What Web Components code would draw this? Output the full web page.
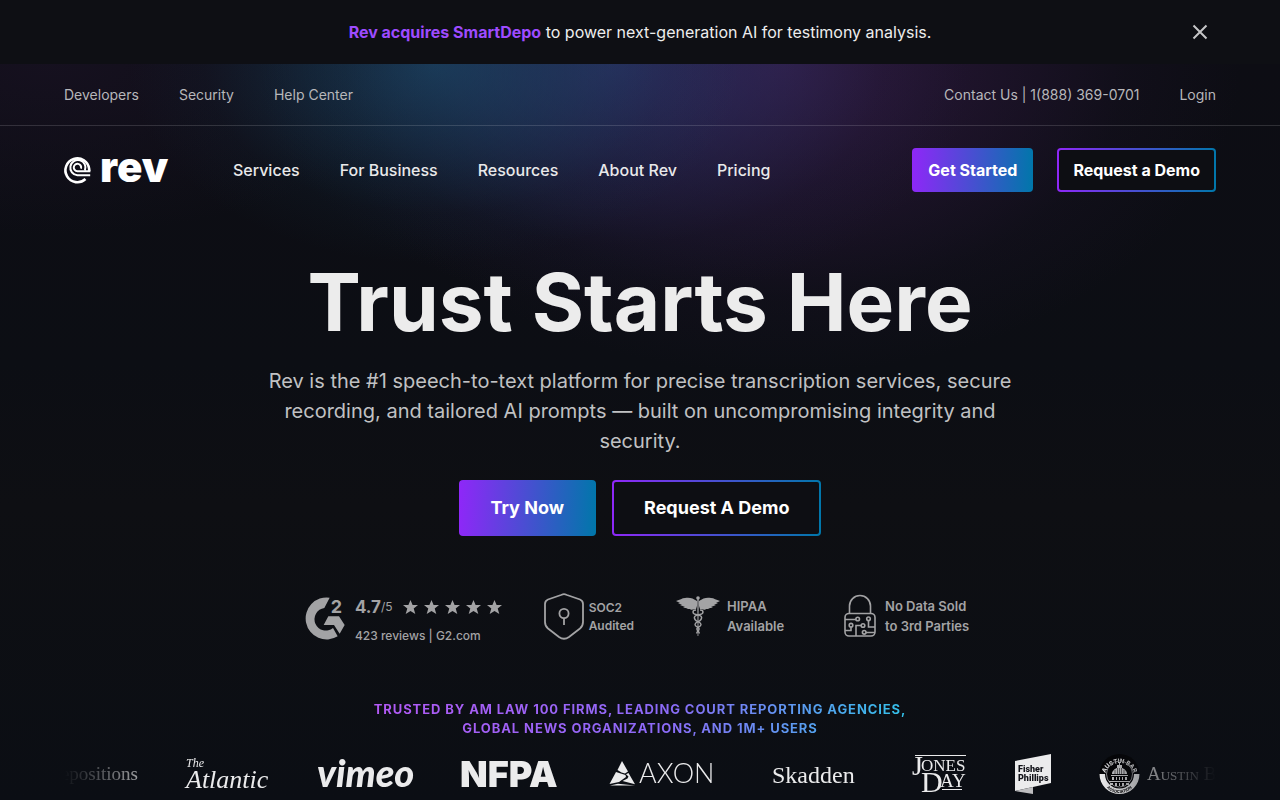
<!DOCTYPE html>
<html lang="en">
<head>
<meta charset="utf-8">
<meta name="viewport" content="width=device-width, initial-scale=1">
<title>Rev | Trust Starts Here</title>
<style>
    body {
        margin: 0;
        background: #0d0e13;
        color: #ededed;
        font-family: Inter, "Liberation Sans", sans-serif;
    }
</style>
</head>
<body>
<rev-page>
    <rev-banner slot="banner"><a href="#smartdepo">Rev acquires SmartDepo</a> to power next-generation AI for testimony analysis.</rev-banner>
    <rev-topbar>
        <a href="#developers">Developers</a>
        <a href="#security">Security</a>
        <a href="#help">Help Center</a>
        <a slot="end" href="#contact">Contact Us | 1(888) 369-0701</a>
        <a slot="end" href="#login">Login</a>
    </rev-topbar>
    <rev-navbar>
        <a href="#services">Services</a>
        <a href="#business">For Business</a>
        <a href="#resources">Resources</a>
        <a href="#about">About Rev</a>
        <a href="#pricing">Pricing</a>
        <rev-button slot="actions" href="#start">Get Started</rev-button>
        <rev-button slot="actions" href="#demo" outline>Request a Demo</rev-button>
    </rev-navbar>
    <rev-hero>
        <span slot="title">Trust Starts Here</span>
        <span slot="text">Rev is the #1 speech-to-text platform for precise transcription services, secure recording, and tailored AI prompts — built on uncompromising integrity and security.</span>
        <rev-button slot="actions" href="#try" large>Try Now</rev-button>
        <rev-button slot="actions" href="#demo" large outline>Request A Demo</rev-button>
    </rev-hero>
    <rev-badges></rev-badges>
    <rev-customers>Trusted by Am Law 100 firms, leading court reporting agencies,<br>global news organizations, and 1M+ users</rev-customers>
</rev-page>

<script>
class RevPage extends HTMLElement {
    connectedCallback() {
        this.attachShadow({ mode: 'open' });
        this.shadowRoot.innerHTML = `
            <style>
                :host {
                    display: flex;
                    flex-direction: column;
                    min-height: 100vh;
                }

                main {
                    flex: 1;
                    background:
                        radial-gradient(ellipse 24% 200px at 34% 0, rgba(28, 84, 118, 0.56), rgba(26, 74, 106, 0.36) 40%, rgba(22, 60, 88, 0.1) 75%, transparent),
                        radial-gradient(ellipse 28% 240px at 48% 0, rgba(46, 62, 126, 0.54), rgba(40, 52, 108, 0.36) 40%, rgba(34, 38, 84, 0.1) 75%, transparent),
                        radial-gradient(ellipse 36% 310px at 61% 0, rgba(84, 38, 108, 0.5), rgba(66, 32, 90, 0.32) 40%, rgba(46, 26, 66, 0.12) 75%, transparent),
                        radial-gradient(ellipse 30% 170px at 4% 0, rgba(30, 20, 42, 0.5), transparent),
                        linear-gradient(#0d0d14, #0c0e14 300px, #0e0f13 60%, #0b0e14);
                }
            </style>
            <slot name="banner"></slot>
            <main><slot></slot></main>
        `;
    }
}

class RevBanner extends HTMLElement {
    connectedCallback() {
        this.attachShadow({ mode: 'open' });
        this.shadowRoot.innerHTML = `
            <style>
                :host {
                    display: grid;
                    grid-template-columns: 1fr auto 1fr;
                    align-items: center;
                    min-height: 64px;
                    padding: 0 64px;
                    background: #0e0f14;
                    font-size: 16px;
                    line-height: 24px;
                }

                p {
                    grid-column: 2;
                    margin: 0;
                }

                ::slotted(a) {
                    color: #9e4bff;
                    font-weight: 700;
                    text-decoration: none;
                }

                button {
                    display: flex;
                    justify-self: end;
                    padding: 8px;
                    border: 0;
                    background: none;
                    color: #c6c6c8;
                    cursor: pointer;
                }
            </style>
            <p><slot></slot></p>
            <button type="button" aria-label="Close">
                <svg width="16" height="16" viewBox="0 0 16 16" fill="none" stroke="currentColor" stroke-width="2"><path d="M1.5 1.5l13 13M14.5 1.5l-13 13"/></svg>
            </button>
        `;

        this.shadowRoot.querySelector('button').addEventListener('click', () => this.remove());
    }
}

class RevTopbar extends HTMLElement {
    connectedCallback() {
        this.attachShadow({ mode: 'open' });
        this.shadowRoot.innerHTML = `
            <style>
                :host {
                    display: flex;
                    justify-content: space-between;
                    padding: 20px 64px;
                    border-bottom: 1px solid rgba(255, 255, 255, 0.14);
                    color: #b7b7ba;
                    font-size: 14px;
                    line-height: 21px;
                }

                div {
                    display: flex;
                    gap: 40px;
                }

                ::slotted(a) {
                    color: inherit;
                    text-decoration: none;
                }
            </style>
            <div><slot></slot></div>
            <div><slot name="end"></slot></div>
        `;
    }
}

class RevLogo extends HTMLElement {
    connectedCallback() {
        this.attachShadow({ mode: 'open' });
        this.shadowRoot.innerHTML = `
            <style>
                :host {
                    display: block;
                }

                a {
                    display: flex;
                    align-items: center;
                    color: #fff;
                }

                svg {
                    display: block;
                    overflow: visible;
                }
            </style>
            <a href="#home" aria-label="rev">
                <svg width="105" height="28" viewBox="0 0 105 28">
                    <g fill="none" stroke="#fff" stroke-width="2.6">
                        <path d="M25.2 15V13.2A11.9 11.9 0 1 0 21.5 23"/>
                        <path d="M20.9 14.6A7.6 7.6 0 1 0 13.4 19.2H26.2" stroke-width="2"/>
                        <path d="M17 12.6A3.7 3.7 0 1 0 13.4 15.2H26.4" stroke-width="2"/>
                    </g>
                    <text x="36" y="26" fill="#fff" font-size="42" font-weight="900">rev</text>
                </svg>
            </a>
        `;
    }
}

class RevNavbar extends HTMLElement {
    connectedCallback() {
        this.attachShadow({ mode: 'open' });
        this.shadowRoot.innerHTML = `
            <style>
                :host {
                    display: flex;
                    align-items: center;
                    gap: 64px;
                    padding: 22px 64px;
                    font-size: 16px;
                    font-weight: 500;
                    line-height: 24px;
                }

                nav {
                    display: flex;
                    flex: 1;
                    gap: 40px;
                }

                .actions {
                    display: flex;
                    gap: 24px;
                }

                ::slotted(a) {
                    color: #e9e9ea;
                    text-decoration: none;
                }
            </style>
            <rev-logo></rev-logo>
            <nav><slot></slot></nav>
            <div class="actions"><slot name="actions"></slot></div>
        `;
    }
}

class RevButton extends HTMLElement {
    connectedCallback() {
        this.attachShadow({ mode: 'open' });
        this.shadowRoot.innerHTML = `
            <style>
                :host {
                    display: block;
                    --brand: linear-gradient(92deg, #8f27f8, #0077aa);
                }

                a {
                    display: block;
                    padding: 10px 16px;
                    border-radius: 4px;
                    background: var(--brand);
                    color: #fff;
                    font-size: 16px;
                    font-weight: 700;
                    line-height: 24px;
                    text-decoration: none;
                    white-space: nowrap;
                }

                :host([large]) a {
                    padding: 15px 32px;
                    font-size: 18px;
                    line-height: 26px;
                }

                :host([outline]) a {
                    border: 2px solid transparent;
                    padding: 8px 14px;
                    background: linear-gradient(#0d0e13, #0d0e13) padding-box, var(--brand) border-box;
                }

                :host([outline][large]) a {
                    padding: 13px 30px;
                }
            </style>
            <a href="${this.getAttribute('href')}"><slot></slot></a>
        `;
    }
}

class RevHero extends HTMLElement {
    connectedCallback() {
        this.attachShadow({ mode: 'open' });
        this.shadowRoot.innerHTML = `
            <style>
                :host {
                    display: flex;
                    flex-direction: column;
                    align-items: center;
                    padding: 44px 64px 0;
                    text-align: center;
                }

                h1 {
                    margin: 0;
                    color: #ececec;
                    font-size: 80px;
                    font-weight: 700;
                    line-height: 88px;
                }

                p {
                    max-width: 768px;
                    margin: 20px 0 24px;
                    color: #c0c1c3;
                    font-size: 20px;
                    line-height: 30px;
                }

                .actions {
                    display: flex;
                    gap: 16px;
                }
            </style>
            <h1><slot name="title"></slot></h1>
            <p><slot name="text"></slot></p>
            <div class="actions"><slot name="actions"></slot></div>
        `;
    }
}

class RevBadges extends HTMLElement {
    connectedCallback() {
        const star = '<svg width="15" height="15" viewBox="0 0 15 15" fill="currentColor"><path d="M7.5 0l2.1 5h5.4l-4.3 3.5 1.6 5.6-4.8-3.2-4.8 3.2 1.6-5.6L0 5h5.4z"/></svg>';

        this.attachShadow({ mode: 'open' });
        this.shadowRoot.innerHTML = `
            <style>
                :host {
                    display: flex;
                    align-items: flex-start;
                    justify-content: center;
                    gap: 42px;
                    padding: 56px 64px 0;
                    color: #a3a3a5;
                    font-size: 13px;
                    font-weight: 600;
                    line-height: 20px;
                }

                .badge {
                    display: flex;
                    align-items: center;
                    min-height: 48px;
                    gap: 5px;
                }

                .rating {
                    align-items: flex-start;
                    gap: 10px;
                    padding-top: 5px;
                    font-size: 12px;
                    font-weight: 500;
                }

                .score {
                    display: flex;
                    align-items: center;
                    padding-bottom: 9px;
                }

                .score b {
                    font-size: 17px;
                }

                .score span {
                    font-weight: 400;
                }

                .stars {
                    display: flex;
                    gap: 6px;
                    margin-left: 10px;
                }

                .soc {
                    min-height: 50px;
                    font-size: 12px;
                    line-height: 18px;
                }

                .hipaa {
                    min-width: 126px;
                    gap: 7px;
                }

                .privacy {
                    min-width: 132px;
                    gap: 9px;
                }

                svg {
                    display: block;
                }
            </style>
            <div class="badge rating">
                <svg width="41" height="44" viewBox="0 0 123 132" fill="currentColor" aria-label="G2">
                    <path d="M77 2A63 63 0 1 0 101 118L87 93A34 34 0 1 1 61 33z"/>
                    <path d="M73 58h32l17 26-15 26-17-26H59z"/>
                    <text x="80" y="47" font-size="54" font-weight="700">2</text>
                </svg>
                <div>
                    <div class="score"><b>4.7</b><span>/5</span><span class="stars">${star.repeat(5)}</span></div>
                    <div>423 reviews | G2.com</div>
                </div>
            </div>
            <div class="badge soc">
                <svg width="40" height="48" viewBox="0 0 40 48" fill="none" stroke="currentColor" stroke-width="1.8">
                    <path d="M20 1.2Q21 1.200 23 2L36 6.500Q39 7.800 39 11V29Q39 33 36 35.500L25 44Q20 47.500 15 44L4 35.500Q1 33 1 29V11Q1 7.800 4 6.500L17 2Q19 1.200 20 1.200z"/>
                    <circle cx="20" cy="20.500" r="4.600"/>
                    <path d="M20 25v7"/>
                </svg>
                <div>SOC2<br>Audited</div>
            </div>
            <div class="badge hipaa">
                <svg width="44" height="42" viewBox="0 0 44 42" fill="currentColor">
                    <path d="M21 6C17 3 13 2 9 3 6 3 4 5 0 6l4 2-2 0 4 2-2 0 5 2-2 1 5 0-2 1 5 0-1 1 6-1 1-3z"/>
                    <path d="M23 6C27 3 31 2 35 3 38 3 40 5 44 6l-4 2 2 0-4 2 2 0-5 2 2 1-5 0 2 1-5 0 1 1-6-1-1-3z"/>
                    <circle cx="22" cy="3" r="1.8"/>
                    <path d="M21.3 4h1.4L22.4 41h-.8z"/>
                    <g fill="none" stroke="currentColor" stroke-width="1.4">
                        <path d="M20 15c-4 0-4 4 0 4.500s7 2 5 5-6 2-6 5 5 2 4 5-3 2-2 4"/>
                        <path d="M24 15c4 0 4 4 0 4.500s-7 2-5 5 6 2 6 5-5 2-4 5 3 2 2 4"/>
                    </g>
                </svg>
                <div>HIPAA<br>Available</div>
            </div>
            <div class="badge privacy">
                <svg width="32" height="44" viewBox="0 0 32 44" fill="none" stroke="currentColor" stroke-width="1.6">
                    <path d="M5.500 19V12A10.500 10.500 0 0 1 26.500 12V19"/>
                    <rect x="1" y="19.500" width="30" height="22.500" rx="4"/>
                    <path d="M1 25.500H12M24.500 26.500V33H31M7 33V36.500H1M12 42V31.500H17.500M22 38.500H31"/>
                    <circle cx="13.700" cy="25" r="1.800"/>
                    <circle cx="24.500" cy="24.800" r="1.800"/>
                    <circle cx="7" cy="31.200" r="1.800"/>
                    <circle cx="19" cy="31.500" r="1.800"/>
                    <circle cx="20.200" cy="38.300" r="1.800"/>
                </svg>
                <div>No Data Sold<br>to 3rd Parties</div>
            </div>
        `;
    }
}

class RevCustomers extends HTMLElement {
    connectedCallback() {
        this.attachShadow({ mode: 'open' });
        this.shadowRoot.innerHTML = `
            <style>
                :host {
                    display: flex;
                    flex-direction: column;
                    align-items: center;
                    padding: 54px 64px 3px;
                }

                h2 {
                    margin: 0 0 16px;
                    background: linear-gradient(97deg, #b359f5, #8c6bf8 55%, #32c3ea);
                    background-clip: text;
                    -webkit-background-clip: text;
                    color: transparent;
                    font-size: 13px;
                    font-weight: 700;
                    letter-spacing: 0.07em;
                    line-height: 19px;
                    text-align: center;
                    text-transform: uppercase;
                }

                .marquee {
                    width: 100%;
                    overflow: hidden;
                    mask-image: linear-gradient(90deg, transparent, #000 10%, #000 90%, transparent);
                    -webkit-mask-image: linear-gradient(90deg, transparent, #000 10%, #000 90%, transparent);
                }

                .track {
                    display: flex;
                    align-items: center;
                    gap: 48px;
                    width: max-content;
                    height: 42px;
                    margin-left: -21px;
                }

                svg {
                    display: block;
                    flex: none;
                    overflow: visible;
                    fill: #ebebec;
                }

                .serif {
                    font-family: "Liberation Serif", serif;
                }
            </style>
            <h2><slot></slot></h2>
            <div class="marquee">
                <div class="track">
                    <svg class="serif" width="95" height="42"><text x="95" y="26" font-size="19" text-anchor="end">Depositions</text></svg>
                    <svg class="serif" width="83" height="42" font-style="italic">
                        <text x="0" y="13" font-size="12">The</text>
                        <text x="0" y="34" font-size="26">Atlantic</text>
                    </svg>
                    <svg width="96" height="42"><text x="0" y="33" font-family="Lato" font-size="38" font-style="italic" font-weight="900">vimeo</text></svg>
                    <svg width="99" height="42"><text x="-1" y="33" font-size="36" font-weight="900">NFPA</text></svg>
                    <svg width="106" height="42">
                        <path d="M14 7l6 10.500-3 2-3.500-1-4-2.500zM8 18l9.500 3 .5 2-7 5-9.500 2zM20.500 19L27 30.300 14.500 27l5-2.500 1-2-2.500-2.200zM2 31.500l8-1.800 17 1.800z"/>
                        <text x="31" y="29" font-family="Lato" font-size="27" font-weight="300">AXON</text>
                    </svg>
                    <svg class="serif" width="102" height="42"><text x="10" y="29" font-size="24">Skadden</text></svg>
                    <svg class="serif" width="55" height="42">
                        <path d="M3 1h51v1H3z"/>
                        <text x="0" y="21" font-size="28">J</text>
                        <text x="9" y="17" font-size="17">ONES</text>
                        <text x="9" y="38" font-size="30">D</text>
                        <text x="28" y="33" font-size="19">AY</text>
                        <path d="M30 35h20v1H30z"/>
                    </svg>
                    <svg width="36" height="42">
                        <path d="M0 7L36 0V29L0 37z"/>
                        <path d="M0 37l18-4v7z" fill="#bdbdbf"/>
                        <g fill="#111218" font-family="Roboto" font-size="9" font-weight="900">
                            <text x="3" y="18">Fisher</text>
                            <text x="3" y="27">Phillips</text>
                        </g>
                    </svg>
                    <svg class="serif" width="230" height="42">
                        <defs>
                            <path id="seal-top" d="M5.500 24A15 15 0 1 1 35.500 24"/>
                            <path id="seal-bottom" d="M2.500 21A18 18 0 0 0 38.500 21"/>
                        </defs>
                        <circle cx="20.500" cy="20" r="20" fill="#050507"/>
                        <path d="M.5 20A20 20 0 0 0 40.500 20H35A14.500 14.500 0 0 1 6 20z"/>
                        <text font-family="Inter" font-size="6" font-weight="700"><textPath href="#seal-top" startOffset="50%" text-anchor="middle">AUSTIN BAR</textPath></text>
                        <text font-family="Inter" font-size="4" font-weight="700" fill="#050507"><textPath href="#seal-bottom" startOffset="50%" text-anchor="middle">ASSOCIATION</textPath></text>
                        <circle cx="20.500" cy="20" r="13" fill="none" stroke="#8b8b8d"/>
                        <path d="M20 8h1v3h-1zM18 11h5v3h-5zM13 20a7.500 6.500 0 0 1 15 0zM12 21h17v1H12zM13 23h2v3h-2zM17 23h1v3h-1zM20 23h1v3h-1zM23 23h1v3h-1zM26 23h2v3h-2zM10 27h21v1H10zM11 29h3v2h-3zM16 29h2v3h-2zM20 29h1v3h-1zM23 29h2v3h-2zM27 29h3v2h-3z" fill="#c9c9cb"/>
                        <path d="M16 20v-4M18.500 20v-6M20.500 20v-6M22.500 20v-6M25 20v-4" stroke="#222" stroke-width="0.600"/>
                        <text x="48" y="26" font-size="19" font-variant="small-caps">Austin Bar Association</text>
                    </svg>
                </div>
            </div>
        `;
    }
}

customElements.define('rev-page', RevPage);
customElements.define('rev-banner', RevBanner);
customElements.define('rev-topbar', RevTopbar);
customElements.define('rev-logo', RevLogo);
customElements.define('rev-button', RevButton);
customElements.define('rev-navbar', RevNavbar);
customElements.define('rev-hero', RevHero);
customElements.define('rev-badges', RevBadges);
customElements.define('rev-customers', RevCustomers);
</script>
</body>
</html>
